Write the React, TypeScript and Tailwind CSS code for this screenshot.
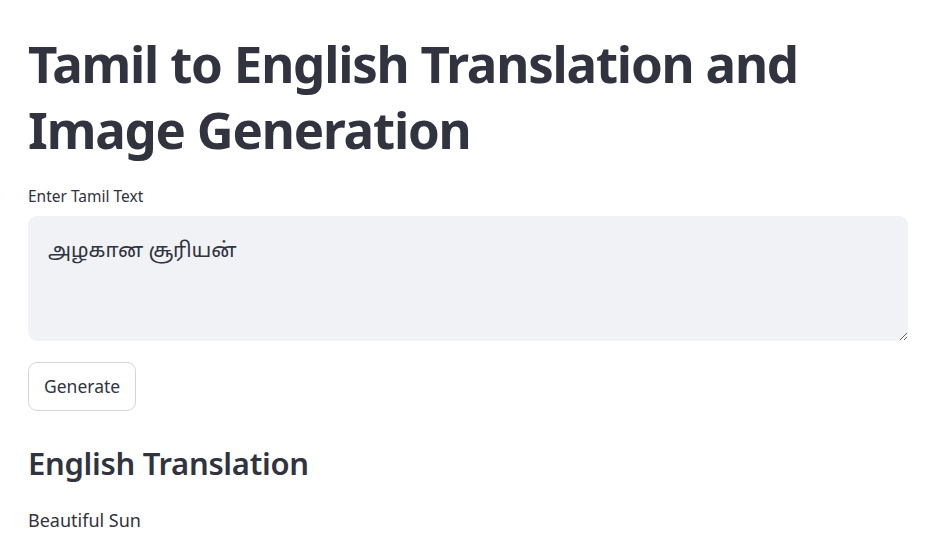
import { useState } from 'react';

export default function App() {
  const [text, setText] = useState('அழகான சூரியன்');

  return (
    <div className="min-h-screen bg-white text-[#31333f] font-['Noto_Sans','Noto_Sans_Tamil',sans-serif]">
      <div className="px-[28px] pt-[30px] w-[936px]">
        <h1 className="text-[51px] font-bold leading-[66px] tracking-[-1.2px]">
          Tamil to English Translation and Image Generation
        </h1>

        <div className="mt-[24px]">
          <label className="block text-[15.5px] leading-[20px] mb-[10px]">Enter Tamil Text</label>
          <textarea
            value={text}
            onChange={(e) => setText(e.target.value)}
            className="block w-full h-[125px] rounded-[9px] bg-[#f0f2f6] px-[20px] pt-[20px] pb-[16px] text-[20.5px] leading-[26px] text-[#31333f] outline-none resize-y"
          />
        </div>

        <button className="mt-[21px] h-[49px] px-[15px] rounded-[9px] border border-[#d5d6da] bg-white text-[17.5px] text-[#31333f]">
          Generate
        </button>

        <h2 className="mt-[30px] text-[31px] font-semibold leading-[44px] tracking-[-0.3px]">English Translation</h2>
        <p className="mt-[23px] text-[18px] leading-[24px]">Beautiful Sun</p>
      </div>
    </div>
  );
}
